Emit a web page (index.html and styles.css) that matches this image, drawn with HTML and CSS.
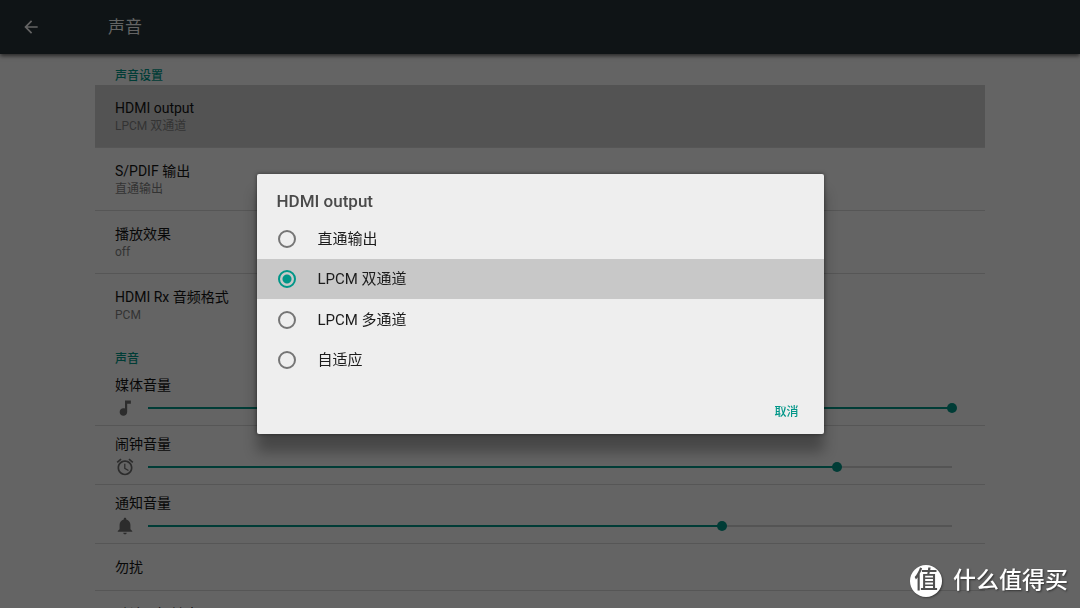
FILE: index.html
```html
<!DOCTYPE html>
<html lang="zh-CN">
<head>
<meta charset="utf-8">
<meta name="viewport" content="width=device-width, initial-scale=1">
<title>声音</title>
<link rel="stylesheet" href="styles.css">
</head>
<body>
<div class="screen">
  <header class="app-bar">
    <button class="back" type="button" aria-label="返回">
      <svg viewBox="0 0 24 24" aria-hidden="true"><path d="M20 11H7.83l5.59-5.59L12 4l-8 8 8 8 1.41-1.41L7.83 13H20z"/></svg>
    </button>
    <h1 class="app-title">声音</h1>
  </header>

  <main class="settings">
    <h2 class="category">声音设置</h2>
    <button class="item item-active" type="button">
      <span class="item-title">HDMI output</span>
      <span class="item-summary">LPCM 双通道</span>
    </button>
    <button class="item" type="button">
      <span class="item-title">S/PDIF 输出</span>
      <span class="item-summary">直通输出</span>
    </button>
    <button class="item" type="button">
      <span class="item-title">播放效果</span>
      <span class="item-summary">off</span>
    </button>
    <button class="item item-last" type="button">
      <span class="item-title">HDMI Rx 音频格式</span>
      <span class="item-summary">PCM</span>
    </button>

    <h2 class="category category-spaced">声音</h2>
    <div class="volume">
      <label class="item-title" for="media">媒体音量</label>
      <div class="volume-control">
        <svg class="volume-icon" viewBox="0 0 24 24" aria-hidden="true"><path d="M12 3v9.6c-.6-.3-1.2-.4-1.9-.4-2.5 0-4.500 2-4.500 4.500s2 4.500 4.500 4.500 4.500-2 4.500-4.500V7H19V3h-7z"/></svg>
        <input class="slider" id="media" type="range" min="0" max="14" value="14" style="--level: 1">
      </div>
    </div>
    <div class="volume">
      <label class="item-title" for="alarm">闹钟音量</label>
      <div class="volume-control">
        <svg class="volume-icon" viewBox="0 0 24 24" aria-hidden="true"><path d="M22 5.72l-4.6-3.86-1.29 1.53 4.6 3.86L22 5.72zM7.88 3.39L6.6 1.86 2 5.71l1.29 1.53 4.59-3.85zM12.5 8H11v6l4.75 2.85.75-1.23-4-2.37V8zM12 4c-4.97 0-9 4.03-9 9s4.02 9 9 9c4.97 0 9-4.03 9-9s-4.03-9-9-9zm0 16c-3.87 0-7-3.13-7-7s3.13-7 7-7 7 3.13 7 7-3.13 7-7 7z"/></svg>
        <input class="slider" id="alarm" type="range" min="0" max="7" value="6" style="--level: 0.857">
      </div>
    </div>
    <div class="volume">
      <label class="item-title" for="notice">通知音量</label>
      <div class="volume-control">
        <svg class="volume-icon" viewBox="0 0 24 24" aria-hidden="true"><path d="M12 22c1.1 0 2-.9 2-2h-4c0 1.1.89 2 2 2zM18.5 16v-5.5c0-3.07-2.13-5.64-5-6.32V3.5c0-.83-.67-1.5-1.5-1.5s-1.5.67-1.5 1.5v.68c-2.87.68-5 3.25-5 6.32V16L3.3 18v1h17.4v-1z"/></svg>
        <input class="slider" id="notice" type="range" min="0" max="7" value="5" style="--level: 0.714">
      </div>
    </div>
    <button class="item item-single" type="button"><span class="item-title">勿扰</span></button>
    <button class="item item-single" type="button"><span class="item-title">默认通知铃声</span></button>
  </main>
</div>

<div class="overlay">
  <form class="dialog" role="dialog" aria-labelledby="dialog-title">
    <h2 class="dialog-title" id="dialog-title">HDMI output</h2>
    <div class="options">
      <label class="option"><input class="radio" type="radio" name="output"><span>直通输出</span></label>
      <label class="option option-selected"><input class="radio" type="radio" name="output" checked><span>LPCM 双通道</span></label>
      <label class="option"><input class="radio" type="radio" name="output"><span>LPCM 多通道</span></label>
      <label class="option"><input class="radio" type="radio" name="output"><span>自适应</span></label>
    </div>
    <div class="actions"><button class="cancel" type="button">取消</button></div>
  </form>
</div>

<div class="watermark">
  <span class="watermark-badge">值</span>
  <span>什么值得买</span>
</div>
</body>
</html>
```
FILE: styles.css
```css
* { box-sizing: border-box; }

body {
  margin: 0;
  background: #646464;
  color: #080808;
  font-family: Roboto, "Noto Sans CJK SC", sans-serif;
}

button {
  margin: 0;
  border: 0;
  padding: 0;
  background: none;
  color: inherit;
  font: inherit;
  text-align: left;
}

h1, h2 { margin: 0; font-weight: 400; }

.screen {
  display: flex;
  flex-direction: column;
  height: 100vh;
  overflow: hidden;
}

.app-bar {
  display: flex;
  flex: none;
  align-items: center;
  gap: 67px;
  height: 54px;
  padding-left: 21px;
  background: #0f1416;
  box-shadow: 0 2px 4px rgba(0, 0, 0, 0.6);
}

.back { width: 20px; height: 20px; }
.back svg { display: block; fill: #646464; }

.app-title { color: #646464; font-size: 17px; line-height: 24px; }

.settings {
  display: flex;
  flex: 1;
  flex-direction: column;
  min-height: 0;
  padding: 14px 95px 0;
  overflow: hidden;
}

.category {
  flex: none;
  padding-left: 20px;
  color: #003c36;
  font-size: 12px;
  font-weight: 500;
  line-height: 17px;
}

.category-spaced { padding-top: 15px; line-height: 15px; }

.item {
  display: flex;
  flex: none;
  flex-direction: column;
  padding: 14px 20px 12px;
  border-bottom: 1px solid #565656;
}

.item-active { background: #535353; }
.item-last { border-bottom-color: transparent; }
.item-single { padding: 14px 20px; }

.item-title { font-size: 14px; line-height: 18px; }
.item-summary { color: #333; font-size: 12px; line-height: 18px; }

.volume {
  display: flex;
  flex: none;
  flex-direction: column;
  gap: 4px;
  padding: 9px 28px 7px 20px;
  border-bottom: 1px solid #565656;
}

.volume-control { display: flex; align-items: center; gap: 8px; height: 20px; }
.volume-icon { flex: none; width: 20px; height: 20px; fill: #2c2c2c; }

.slider {
  flex: 1;
  min-width: 0;
  height: 20px;
  margin: 0;
  appearance: none;
  background:
    linear-gradient(#003c36, #003c36) 5px center / calc((100% - 10px) * var(--level)) 2px no-repeat,
    linear-gradient(#545454, #545454) 5px center / calc(100% - 10px) 2px no-repeat;
}

.slider::-webkit-slider-thumb {
  width: 10px;
  height: 10px;
  appearance: none;
  border-radius: 50%;
  background: #003c36;
}

.overlay {
  position: fixed;
  inset: 0;
  display: flex;
  align-items: center;
  justify-content: center;
}

.dialog {
  width: 53%;
  max-width: 567px;
  border-radius: 2px;
  background: #eee;
  box-shadow: 0 18px 14px rgba(0, 0, 0, 0.3), 0 0 4px rgba(0, 0, 0, 0.5);
}

.dialog-title {
  padding: 15px 20px 5px;
  color: #4a4a4a;
  font-size: 17px;
  font-weight: 500;
  line-height: 24px;
}

.options { display: grid; grid-template-rows: repeat(4, 1fr); height: 162px; }

.option {
  display: flex;
  align-items: center;
  gap: 22px;
  padding: 1px 21px 0;
  color: #1c1c1c;
  font-size: 15px;
  line-height: 20px;
}

.option-selected { background: #c8c8c8; }

.radio {
  width: 18px;
  height: 18px;
  margin: 0;
  appearance: none;
  border: 2px solid #757575;
  border-radius: 50%;
}

.radio:checked {
  border-color: #009688;
  background: radial-gradient(circle, #009688 4px, transparent 5px);
}

.actions { display: flex; justify-content: flex-end; padding: 20px 19px 10px; }

.cancel {
  padding: 3px 6px;
  color: #009688;
  font-size: 12px;
  font-weight: 500;
  line-height: 18px;
}

.watermark {
  position: fixed;
  right: 12px;
  bottom: 11px;
  display: flex;
  align-items: center;
  gap: 11px;
  color: #fff;
  font-size: 23px;
  font-weight: 500;
  line-height: 32px;
  text-shadow: 1px 1px 2px rgba(0, 0, 0, 0.5);
}

.watermark-badge {
  width: 32px;
  height: 32px;
  border-radius: 50%;
  background: #fff;
  box-shadow: 1px 1px 2px rgba(0, 0, 0, 0.4);
  color: #505050;
  font-size: 24px;
  line-height: 31px;
  text-align: center;
  text-shadow: none;
}
```
